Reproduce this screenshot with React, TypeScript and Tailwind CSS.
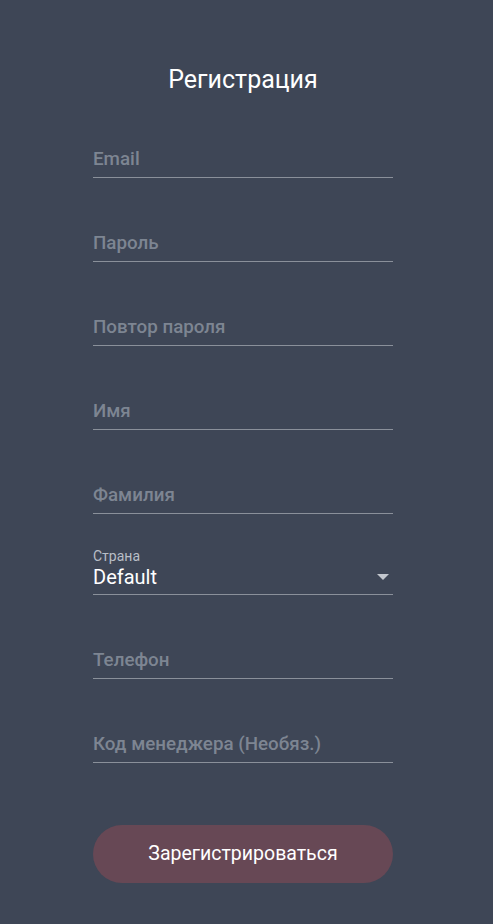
import React from "react";

const fields1 = ["Email", "Пароль", "Повтор пароля", "Имя", "Фамилия"];
const fields2 = ["Телефон", "Код менеджера (Необяз.)"];

function Field({ label }: { label: string }) {
  return (
    <div className="flex h-[84px] flex-col justify-end">
      <div className="border-b border-[#8a909a] pb-[6px]">
        <div className="h-6 text-[18.8px] leading-6 font-medium text-[#7d8592]">{label}</div>
      </div>
    </div>
  );
}

export default function App() {
  return (
    <div
      className="min-h-[924px] w-full bg-[#3e4656]"
      style={{ fontFamily: "Roboto, 'Noto Sans', sans-serif" }}
    >
      <div className="ml-[93px] flex w-[300px] flex-col pt-[66px]">
        <h1 className="h-[28px] text-center text-[25px] leading-[28px] font-normal text-white">Регистрация</h1>
        {fields1.map((f) => (
          <Field key={f} label={f} />
        ))}
        <div className="flex h-[81px] flex-col justify-end">
          <div className="border-b border-[#8a909a] pb-[5px]">
            <div className="mb-[1px] text-[14px] leading-[15px] text-[#b9bec6]">Страна</div>
            <div className="flex h-6 items-center justify-between">
              <span className="text-[20px] leading-6 font-normal text-white">Default</span>
              <svg width="12" height="6" viewBox="0 0 12 6" className="mr-[4px]">
                <path d="M0 0 L12 0 L6 6 Z" fill="#c3c7ce" />
              </svg>
            </div>
          </div>
        </div>
        {fields2.map((f) => (
          <Field key={f} label={f} />
        ))}
        <button className="mt-[62px] flex h-[58px] w-full items-center justify-center rounded-full bg-[#674855] text-[19.5px] text-white">
          Зарегистрироваться
        </button>
      </div>
    </div>
  );
}
